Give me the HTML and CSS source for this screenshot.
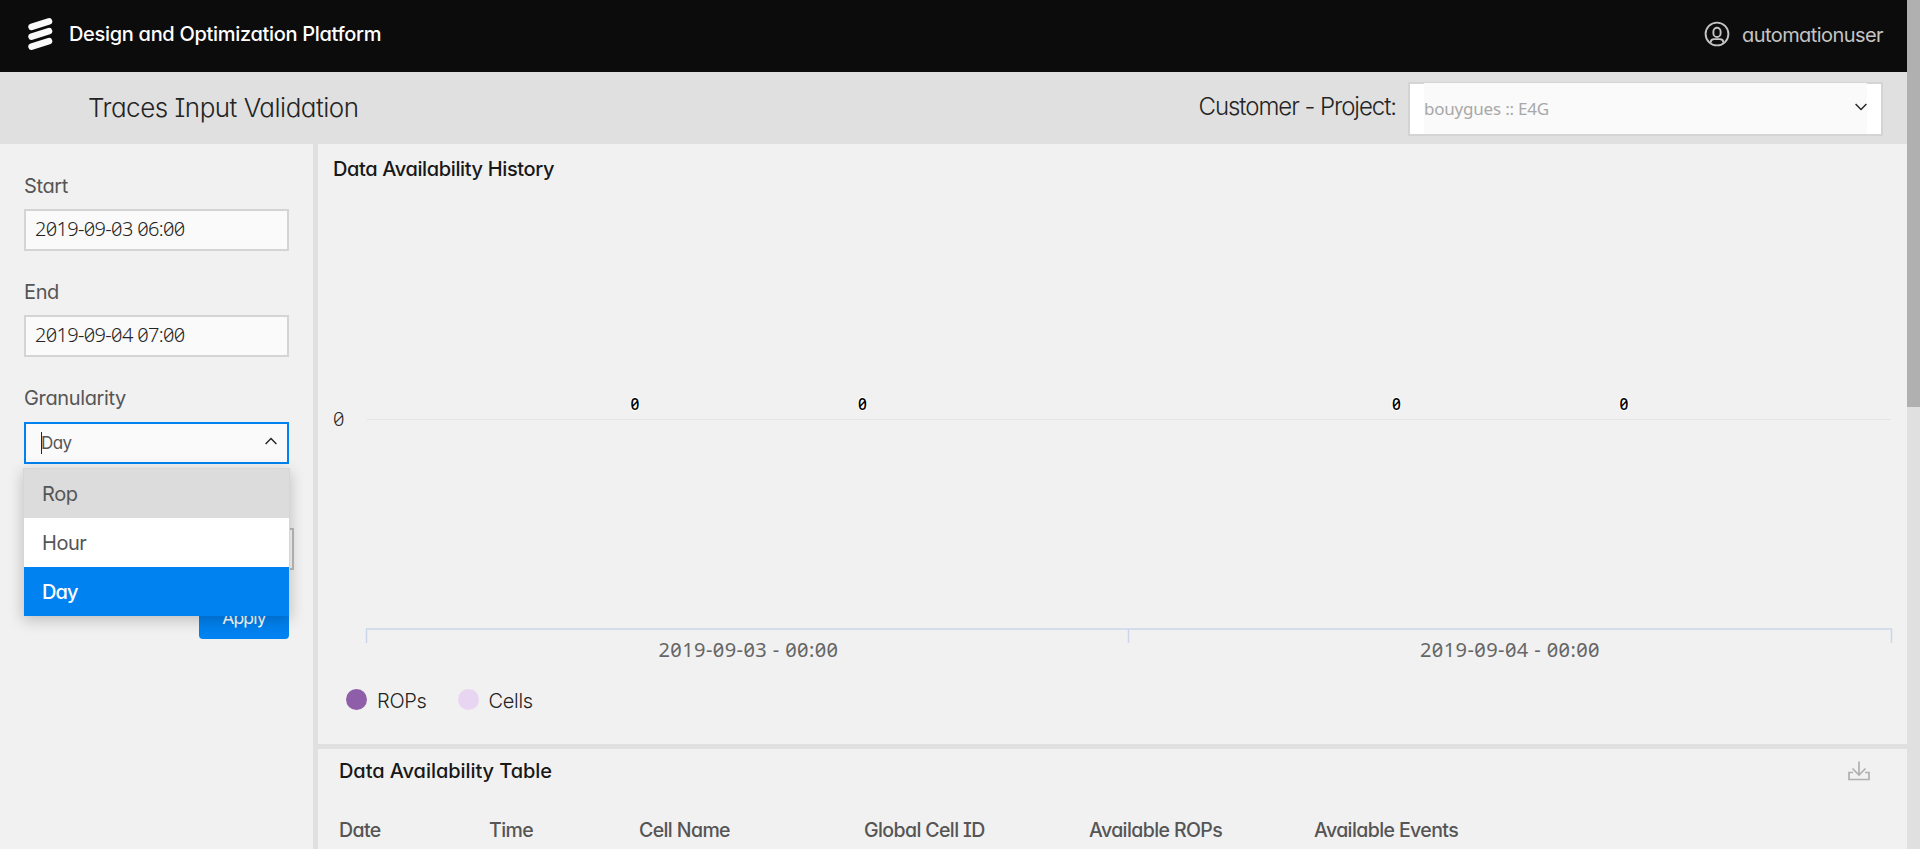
FILE: index.html
```
<!DOCTYPE html>
<html lang="en">
<head>
<meta charset="utf-8">
<title>Design and Optimization Platform</title>
<link rel="stylesheet" href="styles.css">
</head>
<body>
<div class="app">
  <div class="page">
    <header class="topbar">
      <svg class="logo" width="25" height="33" viewBox="0 0 25 33"><g stroke="#fafafa" stroke-width="6.6" stroke-linecap="round"><path d="M3.6 8.9L21 3.4"/><path d="M3.6 18.7L21 13.2"/><path d="M3.6 28.7L21 23.2"/></g></svg>
      <span class="brand">Design and Optimization Platform</span>
      <svg class="user-icon" width="26" height="26" viewBox="0 0 26 26" fill="none" stroke="#c4c4c4" stroke-width="1.9"><circle cx="13" cy="13" r="11.4"/><rect x="9.4" y="6.8" width="7.2" height="9.2" rx="3.6"/><path d="M6.4 21.6c.3-2.4 1.4-3.5 3.6-3.5h6c2.2 0 3.300 1.1 3.600 3.500"/></svg>
      <span class="user">automationuser</span>
    </header>
    <div class="subbar">
      <h1 class="title">Traces Input Validation</h1>
      <span class="project-label">Customer - Project:</span>
      <div class="project-select">
        <div class="project-value"><span>bouygues :: E4G</span>
          <svg width="12" height="8" viewBox="0 0 12 8" fill="none" stroke="#242424" stroke-width="1.4"><path d="M.6 1L6 6.5L11.4 1"/></svg>
        </div>
      </div>
    </div>
    <div class="body">
      <aside class="sidebar">
        <label class="label">Start</label>
        <div class="input num">2019-09-03 06:00</div>
        <label class="label">End</label>
        <div class="input num">2019-09-04 07:00</div>
        <label class="label">Granularity</label>
        <div class="granularity">
          <div class="input select"><i class="caret"></i><span>Day</span>
            <svg width="12" height="8" viewBox="0 0 12 8" fill="none" stroke="#242424" stroke-width="1.4"><path d="M.6 7L6 1.5L11.4 7"/></svg>
          </div>
          <div class="menu">
            <div class="option hover">Rop</div>
            <div class="option">Hour</div>
            <div class="option selected">Day</div>
          </div>
        </div>
        <div class="input covered"></div>
        <button class="apply">Apply</button>
      </aside>
      <main class="main">
        <section class="panel history">
          <h2 class="heading">Data Availability History</h2>
          <svg class="chart" width="1589" height="480" viewBox="318 190 1589 480">
            <path d="M367 419.500H1891" stroke="#e5e5e5"/>
            <path d="M366 629H1892M366.500 629V643M1128.500 629V643M1891.500 629V643" stroke="#ccd6eb" stroke-width="1.5" fill="none"/>
            <g class="axis"><text x="333" y="425.5">0</text></g>
            <g class="point"><text x="635" y="410">0</text><text x="862.5" y="410">0</text><text x="1396.5" y="410">0</text><text x="1624" y="410">0</text></g>
            <g class="tick"><text x="658.5" y="656.5">2019-09-03 - 00:00</text><text x="1420" y="656.5">2019-09-04 - 00:00</text></g>
          </svg>
          <div class="legend">
            <i class="dot rops"></i><span>ROPs</span>
            <i class="dot cells"></i><span>Cells</span>
          </div>
        </section>
        <section class="panel table-panel">
          <div class="table-head">
            <h2 class="heading">Data Availability Table</h2>
            <svg width="24" height="20" viewBox="0 0 24 20" fill="none" stroke="#b0b0b0" stroke-width="1.7"><path d="M12 .5V14M5.500 7.500L12 14L18.500 7.500M6 11.500H2V18.500H22V11.500H18"/></svg>
          </div>
          <div class="columns">
            <span>Date</span><span>Time</span><span>Cell Name</span><span>Global Cell ID</span><span>Available ROPs</span><span>Available Events</span>
          </div>
        </section>
      </main>
    </div>
  </div>
  <div class="scrollbar"><div class="thumb"></div></div>
</div>
</body>
</html>
```
FILE: styles.css
```
* { box-sizing: border-box; }
body { margin: 0; overflow: hidden; background: #f1f1f1; color: #242424; font: 400 20px/24px Inter, "Noto Sans", sans-serif; font-feature-settings: "cv11", "cv08"; }
h1, h2 { margin: 0; font-weight: inherit; font-size: inherit; }
span { white-space: nowrap; }
.app { display: flex; width: 1920px; height: 849px; overflow: hidden; }
.page { flex: 1; display: flex; flex-direction: column; }
.scrollbar { width: 13px; background: #e0e0e0; }
.thumb { height: 407px; background: #b0b0b0; }

.topbar { height: 72px; flex: none; display: flex; align-items: center; padding: 0 24px 4px 28px; background: #0c0c0c; color: #fff; }
.brand { margin-left: 16px; font-weight: 500; letter-spacing: -.31px; }
.user-icon { margin-left: auto; }
.user { margin-left: 12px; color: #c4c4c4; padding-top: 1px; letter-spacing: -.57px; }

.subbar { height: 72px; flex: none; display: flex; align-items: center; padding: 0 24px 0 88px; background: #e0e0e0; }
.title { font-size: 26px; font-weight: 300; line-height: 32px; letter-spacing: -.5px; }
.project-label { margin-left: auto; font-size: 24px; font-weight: 300; line-height: 32px; padding-bottom: 3px; letter-spacing: -1.05px; }
.project-select { width: 475px; height: 54px; margin-left: 12px; padding: 0 14px; border: 2px solid #d4d4d4; background: #fff; position: relative; top: 1px; }
.project-value { height: 51px; margin-top: -1px; padding-bottom: 2px; display: flex; align-items: center; justify-content: space-between; background: #fafafa; color: #a8a8a8; font: 400 17px/24px "Noto Sans", sans-serif; letter-spacing: -.21px; }
.project-value span { padding-top: 2px; }
.project-value svg { margin-bottom: 2px; }

.body { flex: 1; display: flex; min-height: 0; }
.sidebar { width: 318px; padding: 29px 24px 0; border-right: 5px solid #e0e0e0; }
.label { display: block; height: 36px; line-height: 27px; color: #555; letter-spacing: -.36px; }
.input { width: 265px; height: 42px; display: flex; align-items: center; padding: 0 9px; border: 2px solid #d4d4d4; background: #fafafa; margin-bottom: 28px; }
.num { font: 300 20px/24px "Noto Sans", sans-serif; font-feature-settings: "zero"; padding-bottom: 2px; letter-spacing: -.66px; }
.granularity { position: relative; padding-top: 1px; }
.select { justify-content: space-between; border-color: #0082f0; padding: 0 10px 0 15px; font-size: 17px; color: #555; margin-bottom: 64px; letter-spacing: -.6px; }
.select span { margin-left: -1px; margin-right: auto; }
.select svg { margin-bottom: 4px; }
.caret { width: 1px; height: 22px; background: #242424; }
.menu { position: absolute; left: -1px; top: 47px; width: 267px; z-index: 2; border: 1px solid #d6d6d6; border-bottom: 0; background: #fff; box-shadow: 0 4px 14px rgba(0,0,0,.22); }
.option { height: 49px; padding: 13px 18px 0; color: #555; letter-spacing: -.45px; }
.hover { background: #dcdcdc; }
.selected { background: #0082f0; color: #fff; font-weight: 500; letter-spacing: -.9px; }
.covered { width: 270px; border-color: #bbb; margin-bottom: 27px; }
.apply { display: block; margin-left: auto; width: 90px; height: 42px; padding: 0; border: 0; border-radius: 4px; background: #0082f0; color: #fff; font: 400 17.5px/24px Inter, sans-serif; letter-spacing: -.8px; }

.main { flex: 1; display: flex; flex-direction: column; }
.heading { font-weight: 500; color: #181818; letter-spacing: -.37px; }
.history { height: 605px; flex: none; border-bottom: 5px solid #e0e0e0; display: flex; flex-direction: column; }
.history .heading { height: 46px; padding: 13px 0 0 15px; }
.chart { display: block; flex: none; font-family: "Noto Sans", sans-serif; font-feature-settings: "zero"; }
.axis { font-size: 20px; font-weight: 300; fill: #242424; }
.point { font-size: 15.5px; font-weight: 500; text-anchor: middle; fill: #000; stroke: #fff; stroke-width: 2px; paint-order: stroke; }
.tick { font-size: 20px; fill: #666; letter-spacing: .42px; }
.legend { display: flex; align-items: center; padding: 16px 0 0 28px; font-weight: 300; letter-spacing: -.3px; }
.legend span { padding-top: 3px; }
.dot { width: 21px; height: 21px; border-radius: 50%; margin-right: 10px; }
.rops { background: #8e5fa8; }
.cells { margin-left: 31px; background: #e8d5f2; }
.table-head { display: flex; justify-content: space-between; padding: 10px 36px 0 21px; }
.table-head .heading { letter-spacing: -.06px; }
.table-head svg { margin-top: 2px; }
.columns { display: grid; grid-template-columns: 150px 150px 225px 225px 225px 225px; padding: 35px 0 0 21px; color: #555; font-size: 19.5px; font-weight: 500; letter-spacing: -.6px; }
```
